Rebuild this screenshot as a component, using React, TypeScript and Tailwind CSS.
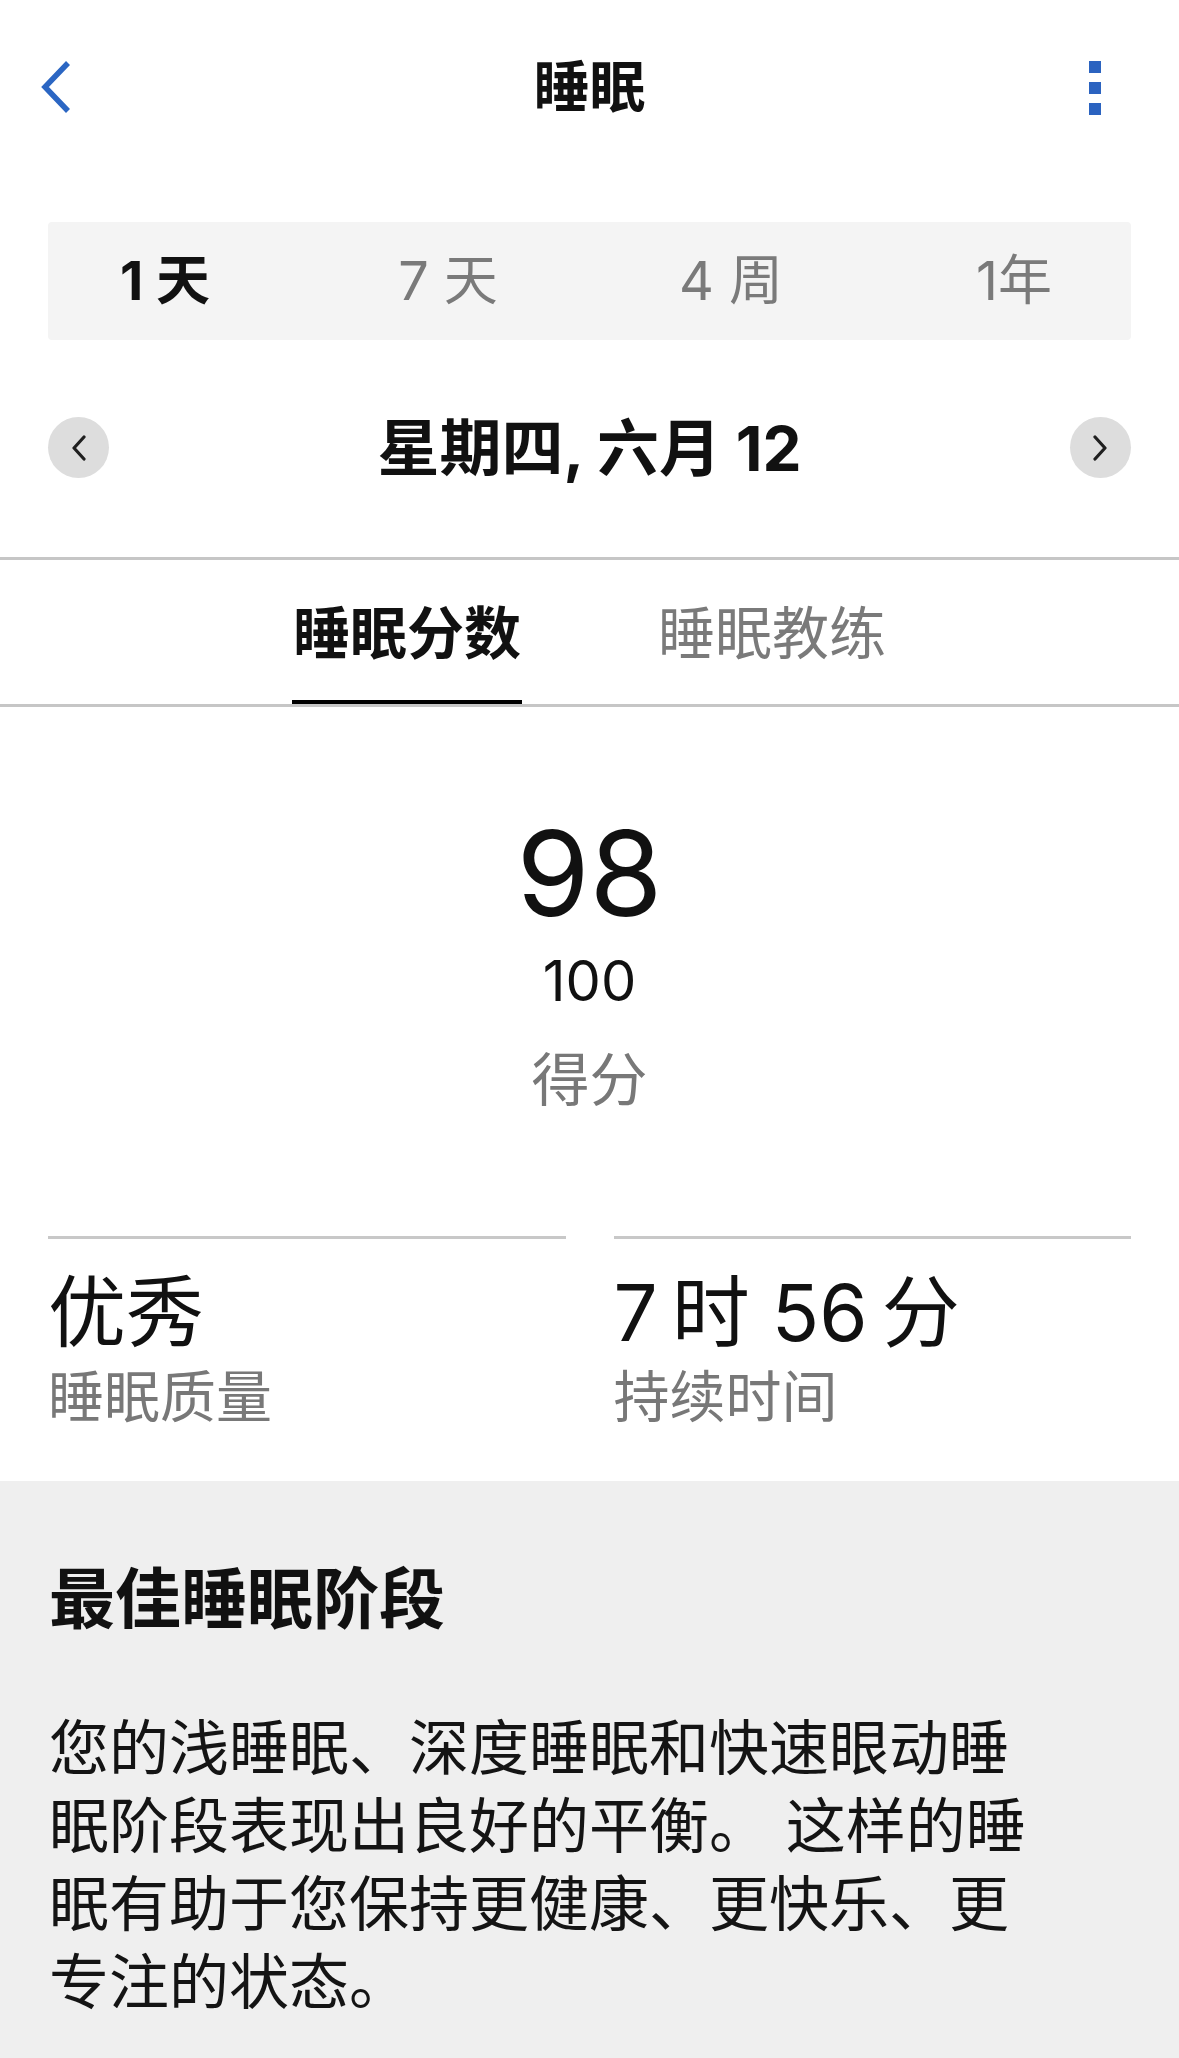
import React from "react";

const segs = [
  { label: "1 天", active: true },
  { label: "7 天", active: false },
  { label: "4 周", active: false },
  { label: "1年", active: false },
];

const Chevron = ({ dir }: { dir: "left" | "right" }) => (
  <svg width="16" height="26" viewBox="0 0 16 26" fill="none">
    <polyline
      points={dir === "left" ? "13,2 3,13 13,24" : "3,2 13,13 3,24"}
      stroke="#1f1f1f"
      strokeWidth="3.2"
      strokeLinecap="round"
      strokeLinejoin="round"
    />
  </svg>
);

export default function App() {
  return (
    <div className="w-[1179px] min-h-[2058px] bg-white font-[Inter,'Noto_Sans_CJK_SC',sans-serif] text-[#111]">
      {/* Header */}
      <div className="h-[174px] grid grid-cols-[120px_1fr_120px] items-center">
        <div className="pl-[40px] flex items-center">
          <svg width="32" height="54" viewBox="0 0 32 54" fill="none">
            <polyline
              points="28,3 5,27 28,51"
              stroke="#2b66c3"
              strokeWidth="5.5"
              strokeLinejoin="miter"
            />
          </svg>
        </div>
        <div className="text-center text-[56px] font-bold leading-none">睡眠</div>
        <div className="flex justify-end pr-[78px]">
          <div className="flex flex-col gap-[9px] mt-[2px]">
            <span className="w-[12px] h-[12px] bg-[#2b63c0]" />
            <span className="w-[12px] h-[12px] bg-[#2b63c0]" />
            <span className="w-[12px] h-[12px] bg-[#2b63c0]" />
          </div>
        </div>
      </div>

      {/* Range selector */}
      <div className="mx-[48px] mt-[48px] h-[118px] bg-[#f4f4f4] rounded-[4px] flex items-center justify-center">
        {segs.map((s) => (
          <div
            key={s.label}
            className={`w-[283px] shrink-0 text-center text-[54px] leading-none ${
              s.active ? "font-bold text-[#111]" : "text-[#7a7a7a]"
            }`}
          >
            {s.label}
          </div>
        ))}
      </div>

      {/* Date row */}
      <div className="mt-[77px] px-[48px] flex items-center justify-between h-[61px]">
        <button className="w-[61px] h-[61px] rounded-full bg-[#dddddd] flex items-center justify-center">
          <Chevron dir="left" />
        </button>
        <div className="text-[62px] font-bold leading-none mt-[2px]">星期四, 六月 12</div>
        <button className="w-[61px] h-[61px] rounded-full bg-[#dddddd] flex items-center justify-center">
          <Chevron dir="right" />
        </button>
      </div>

      {/* Tabs */}
      <div className="mt-[79px] border-t-[3px] border-b-[3px] border-[#c6c6c6] flex justify-center gap-[135px]">
        <div className="w-[230px] h-[144px] flex flex-col">
          <div className="flex-1 flex items-center justify-center pt-[6px] text-[57px] font-bold leading-none">
            睡眠分数
          </div>
          <div className="h-[4px] bg-black" />
        </div>
        <div className="w-[230px] h-[144px] flex flex-col">
          <div className="flex-1 flex items-center justify-center pt-[6px] text-[57px] leading-none text-[#7a7a7a]">
            睡眠教练
          </div>
          <div className="h-[4px]" />
        </div>
      </div>

      {/* Score */}
      <div className="flex flex-col items-center">
        <div className="mt-[107px] text-[118px] leading-none">98</div>
        <div className="mt-[21px] text-[56px] leading-none">100</div>
        <div className="mt-[42px] text-[58px] leading-none text-[#787878]">得分</div>
      </div>

      {/* Stats */}
      <div className="mt-[127px] px-[48px] grid grid-cols-2 gap-[48px] pb-[56px]">
        <div className="border-t-[3px] border-[#c8c8c8]">
          <div className="mt-[35px] text-[78px] leading-none">优秀</div>
          <div className="mt-[17px] text-[56px] leading-none text-[#787878]">睡眠质量</div>
        </div>
        <div className="border-t-[3px] border-[#c8c8c8]">
          <div className="mt-[35px] text-[78px] leading-none">7&#8201;时 56&#8201;分</div>
          <div className="mt-[17px] text-[56px] leading-none text-[#787878]">持续时间</div>
        </div>
      </div>

      {/* Insight */}
      <div className="bg-[#efefef] px-[49px] pt-[85px] pb-[80px] min-h-[576px]">
        <div className="text-[66px] font-bold leading-none">最佳睡眠阶段</div>
        <p className="mt-[77px] w-[1000px] text-[60px] leading-[78px] text-[#141414]">
          您的浅睡眠、深度睡眠和快速眼动睡眠阶段表现出良好的平衡。 这样的睡眠有助于您保持更健康、更快乐、更专注的状态。
        </p>
      </div>
    </div>
  );
}
